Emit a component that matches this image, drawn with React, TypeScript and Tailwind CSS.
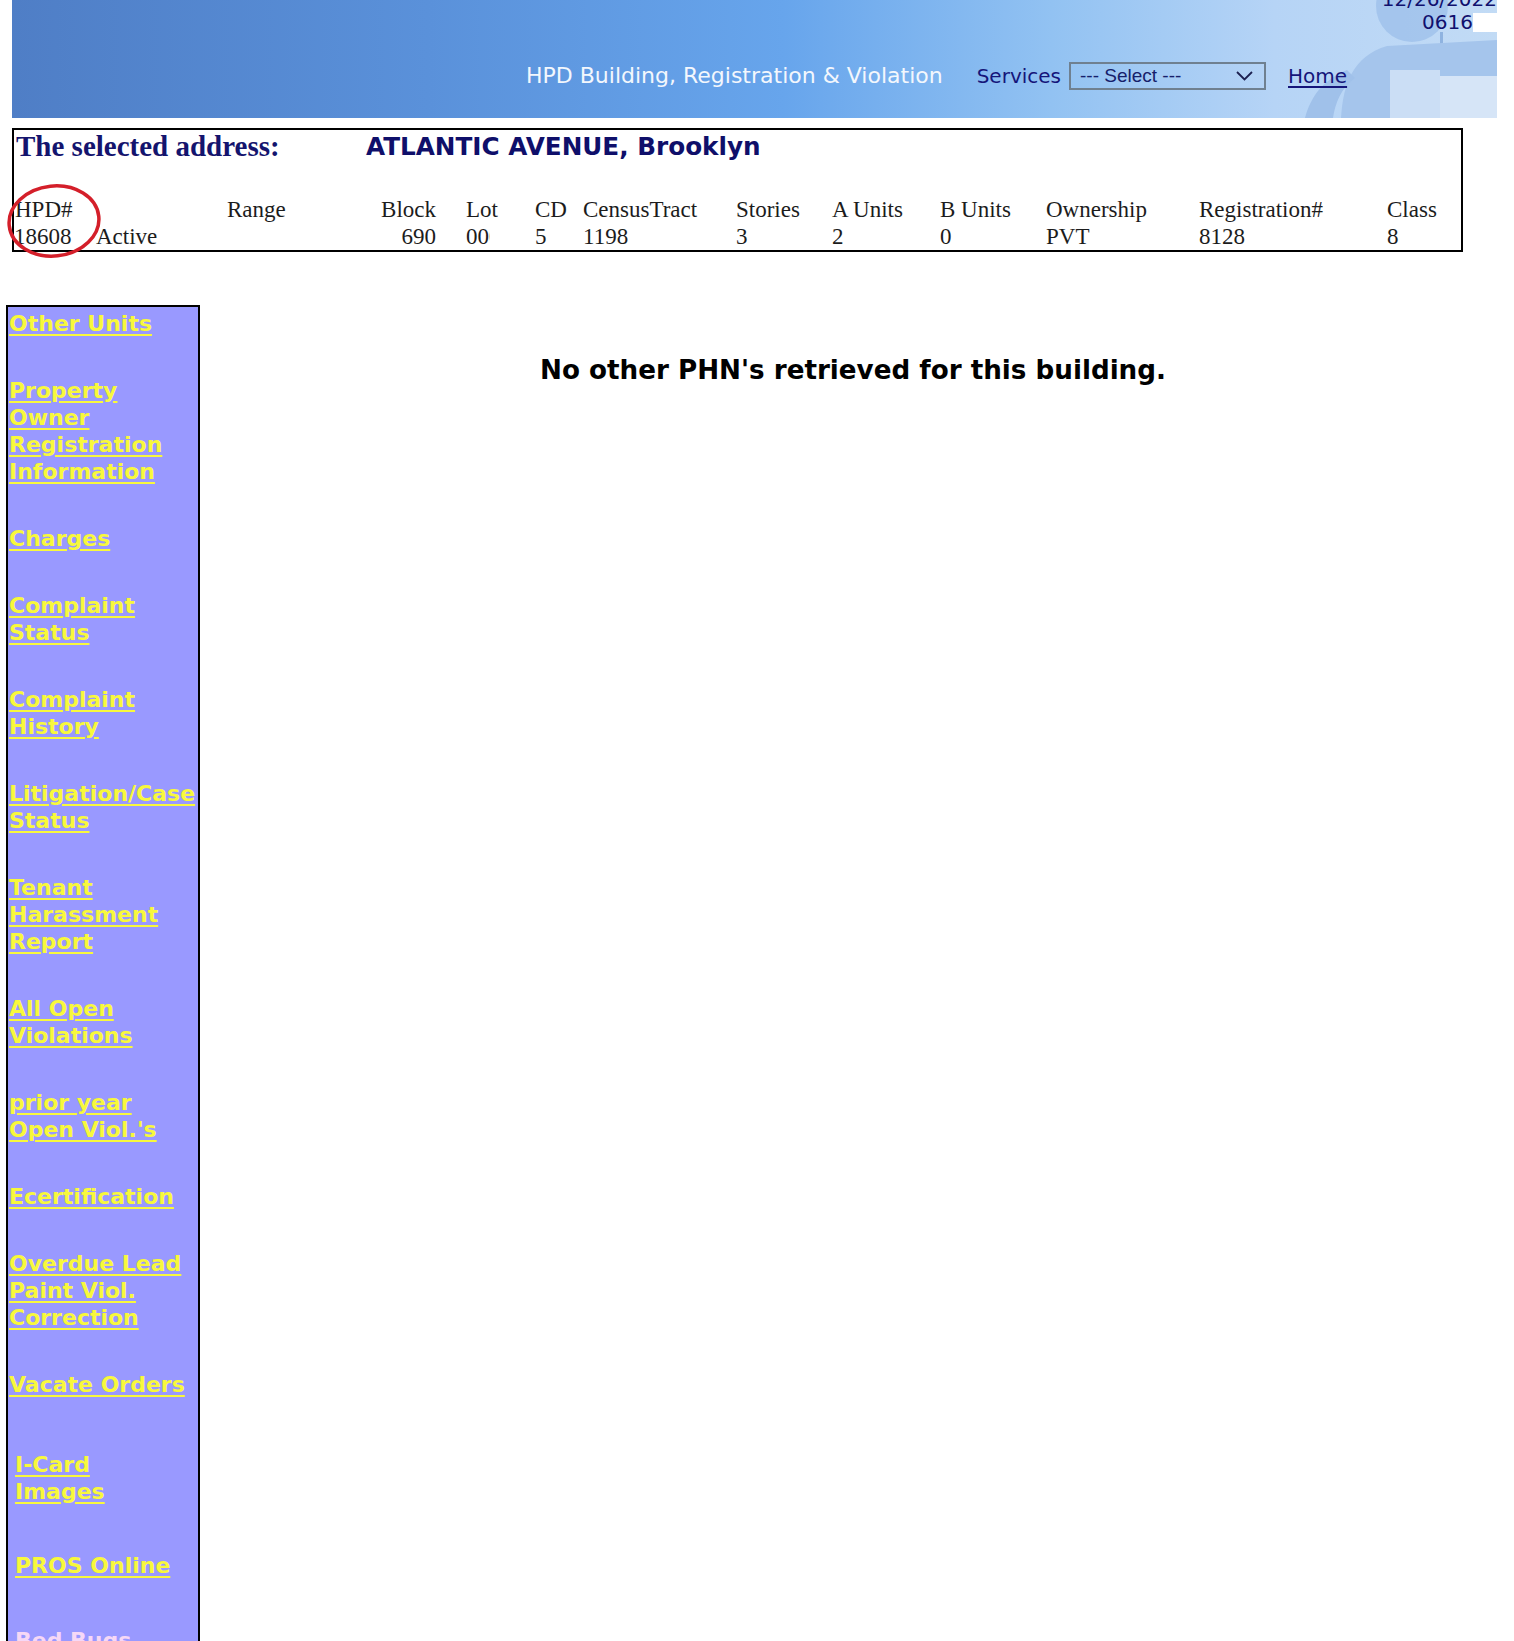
import React from "react";

const sans = { fontFamily: '"DejaVu Sans", Verdana, sans-serif' };

type NavItem = { lines: string[]; extra?: string; indent?: boolean; pale?: boolean };

const navItems: NavItem[] = [
  { lines: ["Other Units"] },
  { lines: ["Property", "Owner", "Registration", "Information"] },
  { lines: ["Charges"] },
  { lines: ["Complaint", "Status"] },
  { lines: ["Complaint", "History"] },
  { lines: ["Litigation/Case", "Status"] },
  { lines: ["Tenant", "Harassment", "Report"] },
  { lines: ["All Open", "Violations"] },
  { lines: ["prior year", "Open Viol.'s"] },
  { lines: ["Ecertification"] },
  { lines: ["Overdue Lead", "Paint Viol.", "Correction"] },
  { lines: ["Vacate Orders"] },
  { lines: ["I-Card", "Images"], extra: "mt-[13px]", indent: true },
  { lines: ["PROS Online"], extra: "mt-[7px]", indent: true },
  { lines: ["Bed Bugs"], extra: "mt-[8px]", indent: true, pale: true },
];

const headers = ["HPD#", "", "Range", "Block", "Lot", "CD", "CensusTract", "Stories", "A Units", "B Units", "Ownership", "Registration#", "Class"];
const values = ["18608", "Active", "", "690", "00", "5", "1198", "3", "2", "0", "PVT", "8128", "8"];

function Silhouette() {
  return (
    <svg className="absolute right-0 top-0" width="240" height="118" viewBox="0 0 240 118">
      <circle cx="155" cy="6" r="36" fill="#9cbfe9" opacity="0.75" />
      <rect x="183" y="32" width="3" height="14" fill="#8fb3e0" />
      <path d="M84 118 C 86 84, 96 56, 130 46 L 240 40 L 240 118 Z" fill="#a5c5ec" />
      <path d="M48 118 C 54 96, 66 80, 90 70 L 98 78 C 84 88, 78 104, 76 118 Z" fill="#a0c1ea" />
      <rect x="133" y="70" width="50" height="48" fill="#cbdef5" />
      <rect x="183" y="76" width="57" height="42" fill="#d6e5f7" />
    </svg>
  );
}

export default function App() {
  return (
    <div className="relative min-h-[1641px] overflow-hidden bg-white">
      <header
        className="relative ml-[12px] flex h-[118px] w-[1485px] bg-[linear-gradient(to_right,#4f7ec6_0%,#5a91da_28%,#67a5ec_52%,#92c2f2_70%,#b6d4f6_85%,#c2dbf5_100%)]"
        style={sans}
      >
        <Silhouette />
        <div className="relative flex items-center self-start pl-[514px] pt-[62px]">
          <span className="text-[22px] leading-[28px] text-[#f3f7fd]">HPD Building, Registration &amp; Violation</span>
          <span className="ml-[34px] text-[20px] leading-[28px] text-[#15157a]">Services</span>
          <div className="ml-[8px] flex h-[28px] w-[197px] items-center justify-between border-2 border-[#6f8090] pl-[9px] pr-[11px]">
            <span className="text-[19px] text-[#16206a]" style={{ fontFamily: '"Liberation Sans", Arial, sans-serif' }}>
              --- Select ---
            </span>
            <svg width="17" height="10" viewBox="0 0 17 10">
              <polyline points="1,1 8.5,8.5 16,1" fill="none" stroke="#1c2050" strokeWidth="1.8" />
            </svg>
          </div>
          <a className="ml-[22px] text-[20px] leading-[28px] text-[#15157a] underline underline-offset-[3px]">Home</a>
        </div>
        <div className="relative ml-auto -mt-[12px] flex flex-col items-end text-[20px] leading-[23px] text-[#10106e]">
          <span>12/26/2022</span>
          <div className="flex items-center">
            <span>0616</span>
            <span className="h-[19px] w-[24px] bg-white" />
          </div>
        </div>
      </header>

      <section className="ml-[12px] mt-[10px] w-[1451px] border-2 border-black">
        <div className="flex h-[33px] items-center">
          <span
            className="w-[352px] pl-[2px] text-[29px] font-bold text-[#14146e]"
            style={{ fontFamily: '"Liberation Serif", "Times New Roman", serif' }}
          >
            The selected address:
          </span>
          <span className="text-[24.7px] font-bold text-[#0f0f6a]" style={sans}>
            ATLANTIC AVENUE, Brooklyn
          </span>
        </div>
        <div className="h-[33px]" />
        <div
          className="grid grid-cols-[82px_131px_132px_107px_69px_48px_153px_96px_108px_106px_153px_188px_74px] text-[23px] leading-[27px] text-[#1c1c1c]"
          style={{ fontFamily: '"Liberation Serif", "Times New Roman", serif' }}
        >
          {headers.map((h, i) => (
            <div key={"h" + i} className={i === 3 ? "pr-[30px] text-right" : i === 0 ? "pl-[1px]" : ""}>
              {h}
            </div>
          ))}
          {values.map((v, i) => (
            <div key={"v" + i} className={i === 3 ? "pr-[30px] text-right" : ""}>
              {i === 4 ? <span className="block w-[24px] overflow-hidden whitespace-nowrap">0001</span> : v}
            </div>
          ))}
        </div>
      </section>

      <svg className="absolute left-[5px] top-[182px]" width="98" height="78" viewBox="0 0 98 78">
        <ellipse cx="49" cy="39" rx="45" ry="35" fill="none" stroke="#d41f2a" strokeWidth="3.5" transform="rotate(-6 49 39)" />
      </svg>

      <div className="mt-[53px] flex">
        <nav
          className="ml-[6px] flex w-[194px] flex-col gap-[40px] overflow-hidden border-2 border-black bg-[#9999ff] pb-[120px] pl-[1px] pt-[3px]"
          style={sans}
        >
          {navItems.map((item, i) => (
            <a
              key={i}
              className={`${item.extra ?? ""} ${item.indent ? "pl-[6px]" : ""} whitespace-nowrap text-[22px] font-bold leading-[27px] underline decoration-[2px] underline-offset-[3px] ${
                item.pale ? "text-[#f6d8f6]" : "text-[#f8f83c]"
              }`}
            >
              {item.lines.map((line, j) => (
                <span key={j} className="block">
                  {line}
                </span>
              ))}
            </a>
          ))}
        </nav>
        <main className="flex-1 pr-[8px] pt-[50px] text-center">
          <p className="text-[26.2px] font-bold leading-[30px] text-black" style={sans}>
            No other PHN's retrieved for this building.
          </p>
        </main>
      </div>
    </div>
  );
}
